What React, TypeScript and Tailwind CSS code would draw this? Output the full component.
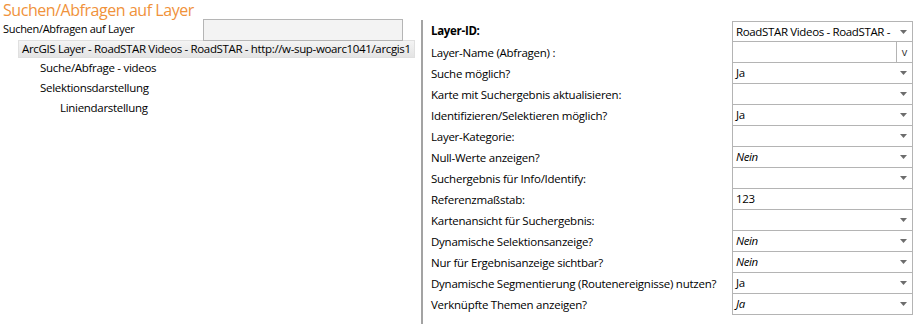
import React from "react";

type Row = {
  label: string;
  bold?: boolean;
  kind: "select" | "text" | "button";
  value?: string;
  italic?: boolean;
};

const rows: Row[] = [
  { label: "Layer-ID:", bold: true, kind: "select", value: "RoadSTAR Videos - RoadSTAR -" },
  { label: "Layer-Name (Abfragen) :", kind: "button" },
  { label: "Suche möglich?", kind: "select", value: "Ja" },
  { label: "Karte mit Suchergebnis aktualisieren:", kind: "select" },
  { label: "Identifizieren/Selektieren möglich?", kind: "select", value: "Ja" },
  { label: "Layer-Kategorie:", kind: "select" },
  { label: "Null-Werte anzeigen?", kind: "select", value: "Nein", italic: true },
  { label: "Suchergebnis für Info/Identify:", kind: "select" },
  { label: "Referenzmaßstab:", kind: "text", value: "123" },
  { label: "Kartenansicht für Suchergebnis:", kind: "select" },
  { label: "Dynamische Selektionsanzeige?", kind: "select", value: "Nein", italic: true },
  { label: "Nur für Ergebnisanzeige sichtbar?", kind: "select", value: "Nein", italic: true },
  { label: "Dynamische Segmentierung (Routenereignisse) nutzen?", kind: "select", value: "Ja" },
  { label: "Verknüpfte Themen anzeigen?", kind: "select", value: "Ja", italic: true },
];

function Arrow() {
  return (
    <svg width="7" height="4" viewBox="0 0 7 4" className="mr-[5px] shrink-0">
      <path d="M0 0 H7 L3.5 4 Z" fill="#6d6d6d" />
    </svg>
  );
}

function Field({ row, first }: { row: Row; first: boolean }) {
  return (
    <div
      className={`flex h-[21px] w-[181px] items-center border-x border-b border-[#b4b4b4] bg-white ${
        first ? "border-t" : ""
      }`}
    >
      <span
        className={`flex-1 overflow-hidden whitespace-nowrap pl-[3px] text-[11.5px] text-black ${
          row.italic ? "italic tracking-[-0.4px]" : "tracking-[-0.35px]"
        }`}
      >
        {row.value ?? ""}
      </span>
      {row.kind === "select" && <Arrow />}
      {row.kind === "button" && (
        <span className="flex h-full w-[16px] items-center justify-center border-l border-[#b4b4b4] text-[11px] text-[#333]">
          v
        </span>
      )}
    </div>
  );
}

export default function App() {
  return (
    <div
      className="h-[324px] w-[915px] overflow-hidden bg-white text-black"
      style={{ fontFamily: '"Open Sans", "Noto Sans", sans-serif' }}
    >
      <h1 className="h-[20px] whitespace-nowrap pl-[3px] text-[16px] leading-[20px] tracking-[-0.45px] text-[#f0923b]">
        Suchen/Abfragen auf Layer
      </h1>

      <div className="flex h-[304px]">
        {/* tree */}
        <div className="w-[421px] shrink-0">
          <div className="flex h-[18px] items-start">
            <span className="whitespace-nowrap pl-[3px] pt-[1px] text-[11px] leading-[16px] tracking-[-0.3px]">
              Suchen/Abfragen auf Layer
            </span>
            <div className="ml-auto mr-[18px] -mt-[1px] h-[22px] w-[200px] border border-[#b5b5b5] bg-[#f3f3f3]" />
          </div>
          <div className="mt-[2px] ml-[18px] mr-[6px] flex h-[18px] items-center whitespace-nowrap border border-[#e0e0e0] bg-gradient-to-b from-[#f4f4f4] to-[#e4e4e4] pl-[3px] text-[11.5px] tracking-[-0.35px]">
            ArcGIS Layer - RoadSTAR Videos - RoadSTAR - http://w-sup-woarc1041/arcgis1
          </div>
          <div className="flex h-[20px] items-center whitespace-nowrap pl-[40px] text-[11.5px] tracking-[-0.3px]">
            Suche/Abfrage - videos
          </div>
          <div className="flex h-[20px] items-center whitespace-nowrap pl-[40px] text-[11.5px] tracking-[-0.3px]">
            Selektionsdarstellung
          </div>
          <div className="flex h-[20px] items-center whitespace-nowrap pl-[60px] text-[11.5px] tracking-[-0.3px]">
            Liniendarstellung
          </div>
        </div>

        <div className="w-[2px] shrink-0 bg-[#a3a3a3]" />

        {/* properties */}
        <div className="flex flex-1 flex-col pl-[8px]">
          {rows.map((row, i) => (
            <div key={row.label} className={`flex items-center ${i === 0 ? "h-[22px]" : "h-[21px]"}`}>
              <span
                className={`flex-1 whitespace-nowrap text-[11.5px] ${
                  row.bold ? "font-bold tracking-[-0.3px]" : "tracking-[-0.25px]"
                }`}
              >
                {row.label}
              </span>
              <div className="mr-[2px] self-end">
                <Field row={row} first={i === 0} />
              </div>
            </div>
          ))}
        </div>
      </div>
    </div>
  );
}
